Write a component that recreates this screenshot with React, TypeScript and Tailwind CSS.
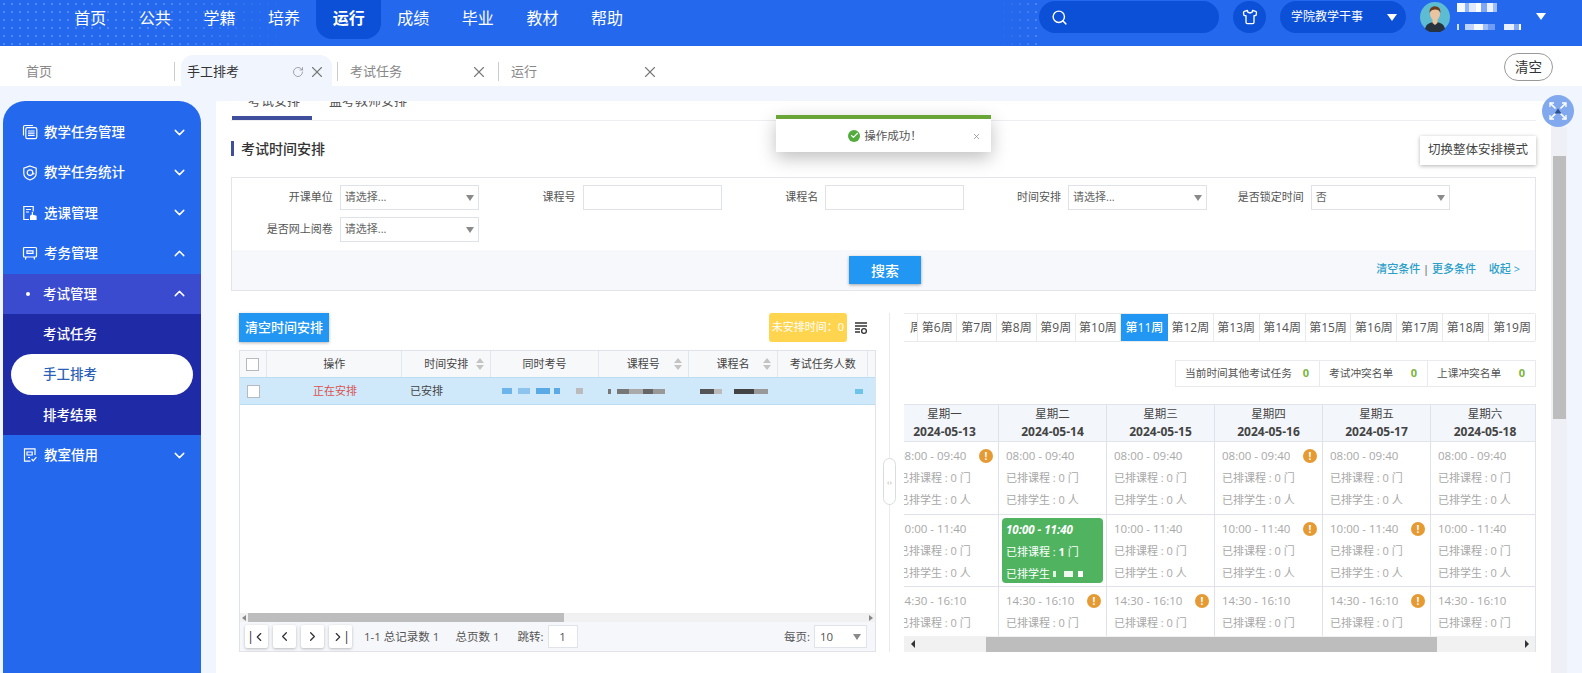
import React from 'react'
import { ChevronDown, ChevronUp, ChevronLeft, ChevronRight, Search, Shirt, RotateCw, X, Check } from 'lucide-react'

const navItems = ['首页', '公共', '学籍', '培养', '运行', '成绩', '毕业', '教材', '帮助']
const weeks = ['第12周', '第13周', '第14周', '第15周', '第16周', '第17周', '第18周', '第19周']
const days = [
  { name: '星期一', date: '2024-05-13' },
  { name: '星期二', date: '2024-05-14' },
  { name: '星期三', date: '2024-05-15' },
  { name: '星期四', date: '2024-05-16' },
  { name: '星期五', date: '2024-05-17' },
  { name: '星期六', date: '2024-05-18' },
]
const slots = [
  { time: '08:00 - 09:40', warn: [0, 3] },
  { time: '10:00 - 11:40', warn: [3, 4] },
  { time: '14:30 - 16:10', warn: [1, 2, 4] },
]

const Caret = () => <span className="h-0 w-0 border-x-[4px] border-t-[6px] border-x-transparent border-t-[#8a8a8a]" />

const Mosaic = ({ blocks, h = 'h-[5px]' }: { blocks: [number, string][]; h?: string }) => (
  <span className="flex items-center blur-[0.5px]">
    {blocks.map(([w, c], i) => (
      <span key={i} className={h} style={{ width: w, background: c }} />
    ))}
  </span>
)

const SideIcon = ({ kind }: { kind: number }) => (
  <svg viewBox="0 0 16 16" className="h-[16px] w-[16px]" fill="none" stroke="white" strokeWidth="1.2">
    {kind === 0 && (
      <>
        <path d="M1.500 11.500V3a1.500 1.500 0 0 1 1.500-1.500h8" />
        <rect x="3.800" y="3.600" width="11" height="11" rx="1.600" />
        <path d="M6 7h6.600M6 9.200h6.600M6 11.400h6.600" />
      </>
    )}
    {kind === 1 && (
      <>
        <path d="M8 1 14.200 3.200v5c0 3.400-2.800 5.600-6.200 6.800-3.400-1.200-6.200-3.400-6.200-6.800v-5z" />
        <circle cx="8" cy="7.600" r="2.800" />
        <path d="M10.800 7.600c0 1.600 1 1.800 1.400.8" />
      </>
    )}
    {kind === 2 && (
      <>
        <path d="M7 14.500H1.800v-13h9.400v5" />
        <path d="M4 4.500h5M4 7h3" />
        <path d="M8 15v-4.300l1.800-1.200V7h1.200v2.800l3.600.9V15z" fill="white" stroke="none" />
      </>
    )}
    {kind === 3 && (
      <>
        <rect x="1.500" y="2.500" width="13" height="9.500" rx="1" />
        <path d="M5 5.800h6v2.600H5zM4 12l-.6 2.500M12 12l.6 2.500" />
      </>
    )}
    {kind === 4 && (
      <>
        <path d="M13 8V1.800H2.500v12.400h6" />
        <path d="M5 5h5.200v3H5zM6 10.500h2" />
        <path d="m9.600 12 1.600 1.800 3.200-3.600" />
      </>
    )}
  </svg>
)

const SideRow = ({ icon, label, open }: { icon: number; label: string; open?: boolean }) => (
  <div className="flex h-[40.4px] items-center pl-[19px] pr-[13px] text-white">
    <SideIcon kind={icon} />
    <span className="ml-[6px] flex-1 text-[13.5px] font-medium">{label}</span>
    {open ? <ChevronUp size={17} /> : <ChevronDown size={17} />}
  </div>
)

const Field = ({ label, children }: { label: string; children: React.ReactNode }) => (
  <div className="flex w-[242.75px] items-center justify-end gap-[7px]">
    <span className="text-[11px] text-[#555]">{label}</span>
    {children}
  </div>
)

const SelectBox = ({ value }: { value: string }) => (
  <div className="flex h-[25px] w-[139px] items-center justify-between border border-[#dfe2e8] bg-white pl-[4px] pr-[4px] text-[11px] text-[#666]">
    {value}
    <Caret />
  </div>
)

const TextBox = () => <div className="h-[25px] w-[139px] border border-[#dfe2e8] bg-white" />

const Warn = () => (
  <span className="absolute right-[5px] top-[7px] flex h-[14px] w-[14px] items-center justify-center rounded-full bg-[#e59a33] text-[10px] font-bold leading-none text-white">
    !
  </span>
)

const HeadCell = ({ w, label, sort, children }: { w: string; label?: string; sort?: boolean; children?: React.ReactNode }) => (
  <div className={`relative flex h-full items-center justify-center border-r border-[#e3e6ec] text-[11px] text-[#444] ${w}`}>
    {label}
    {children}
    {sort && (
      <span className="absolute right-[6px] top-[7px] flex flex-col gap-[2px]">
        <span className="h-0 w-0 border-x-[4px] border-b-[5px] border-x-transparent border-b-[#c4c4c4]" />
        <span className="h-0 w-0 border-x-[4px] border-t-[5px] border-x-transparent border-t-[#c4c4c4]" />
      </span>
    )}
  </div>
)

const PageBtn = ({ children }: { children: React.ReactNode }) => (
  <div className="flex h-[23px] w-[23px] items-center justify-center rounded-[2px] bg-white text-[#333] shadow-[0_1px_3px_rgba(0,0,0,0.25)]">
    {children}
  </div>
)

export default function App() {
  return (
    <div className="relative h-[673px] w-[1582px] overflow-hidden bg-[#f1f5fe] [font-family:'Open_Sans','Noto_Sans_CJK_SC',sans-serif]">
      {/* top bar */}
      <header className="relative flex h-[46px] items-start bg-[#2468ee] text-white">
        <div className="absolute left-0 top-0 h-full w-[290px] bg-[radial-gradient(circle,rgba(255,255,255,0.2)_1px,transparent_1.6px)] bg-[length:8px_8px] [mask-image:linear-gradient(to_right,black_55%,transparent)]" />
        <div className="absolute left-[1000px] top-0 h-full w-[40px] bg-[radial-gradient(circle,rgba(255,255,255,0.2)_1px,transparent_1.6px)] bg-[length:8px_8px] [mask-image:linear-gradient(to_left,black,transparent)]" />
        <nav className="relative ml-[58px] flex">
          {navItems.map(item => (
            <div
              key={item}
              className={`flex h-[39px] w-[64.6px] items-center justify-center pb-[3px] text-[16px] ${item === '运行' ? 'rounded-b-[16px] bg-[#0d50d8] font-bold' : ''}`}
            >
              {item}
            </div>
          ))}
        </nav>
        <div className="relative ml-auto flex items-start pr-[36px] pt-[1px]">
          <div className="flex h-[32px] w-[180px] items-center rounded-full bg-[#0d50d8] pl-[12px]">
            <Search size={17} strokeWidth={2} />
          </div>
          <div className="ml-[14px] flex h-[32px] w-[33px] items-center justify-center rounded-full bg-[#0d50d8]">
            <Shirt size={16} />
          </div>
          <div className="ml-[14px] flex h-[32px] w-[126px] items-center justify-between rounded-full bg-[#0d50d8] pl-[11px] pr-[9px] text-[12px]">
            学院教学干事
            <span className="h-0 w-0 border-x-[5px] border-t-[7px] border-x-transparent border-t-white" />
          </div>
          <svg viewBox="0 0 30 30" className="ml-[14px] mt-[1px] h-[30px] w-[30px]">
            <circle cx="15" cy="15" r="15" fill="#5dbcd2" />
            <path d="M5 27c1-5 5-7 10-7s9 2 10 7a15 15 0 0 1-20 0z" fill="#26333f" />
            <path d="M12.500 16h5v5l-2.500 2-2.500-2z" fill="#eac4a0" />
            <ellipse cx="15" cy="12" rx="5" ry="6" fill="#eac4a0" />
            <path d="M9.600 11c-.5-5 3-7 6-6.600 3 0 5.400 2.600 4.800 6.600-1-2.600-2.600-3.400-5-3.400-2.600 0-4.800.8-5.800 3.400z" fill="#6b3c1d" />
          </svg>
          <div className="ml-[7px] flex h-[31px] w-[79px] flex-col justify-between py-[2px]">
            <Mosaic h="h-[9px]" blocks={[[8, '#f4f8ff'], [4, '#8fb4ff'], [7, '#dfe9ff'], [5, '#ffffff'], [6, '#7fa8f8'], [6, '#eaf1ff'], [4, '#9dbdff']]} />
            <Mosaic h="h-[6px]" blocks={[[2, '#cfe0ff'], [6, '#2468ee'], [9, '#bcd3ff'], [9, '#f4f8ff'], [5, '#9dbdff'], [7, '#6f9df5'], [9, '#2468ee'], [10, '#e6eeff'], [5, '#7fa8f8'], [2, '#ffffff']]} />
          </div>
          <span className="mt-[12px] h-0 w-0 border-x-[5px] border-t-[7px] border-x-transparent border-t-white" />
        </div>
      </header>

      {/* open tabs */}
      <div className="flex h-[40px] items-end bg-white pl-[15px] text-[13px]">
        <div className="mb-[5px] flex h-[19px] w-[160px] items-center border-r border-[#ccc] pl-[11px] text-[#888]">首页</div>
        <div className="ml-[6px] flex h-[31px] w-[151px] items-center rounded-t-[12px] bg-[#f1f5fe] pl-[6px] pr-[6px] pt-[2px] text-[#333]">
          <span className="flex-1">手工排考</span>
          <RotateCw size={12} strokeWidth={1.500} className="mr-[4px] text-[#888]" />
          <X size={18} strokeWidth={1.500} className="text-[#777]" />
        </div>
        <div className="mb-[5px] ml-[5px] flex h-[19px] w-[162px] items-center border-x border-[#ccc] pl-[12px] pr-[10px] text-[#888]">
          <span className="flex-1">考试任务</span>
          <X size={18} strokeWidth={1.500} className="text-[#777]" />
        </div>
        <div className="mb-[5px] flex h-[19px] w-[160px] items-center pl-[12px] text-[#888]">
          <span className="flex-1">运行</span>
          <X size={18} strokeWidth={1.500} className="text-[#777]" />
        </div>
        <div className="mb-[5px] ml-auto mr-[29px] flex h-[28px] w-[49px] items-center justify-center rounded-full border border-[#999] text-[13.5px] text-[#333]">
          清空
        </div>
      </div>

      <div className="flex pt-[15px]">
        {/* sidebar */}
        <aside className="ml-[3px] h-[572px] w-[198px] rounded-t-[22px] bg-[#2468ee] pt-[11px]">
          <SideRow icon={0} label="教学任务管理" />
          <SideRow icon={1} label="教学任务统计" />
          <SideRow icon={2} label="选课管理" />
          <SideRow icon={3} label="考务管理" open />
          <div className="flex h-[40.4px] items-center bg-[#3a4bd0] pl-[23px] pr-[13px] text-white">
            <span className="h-[4px] w-[4px] rounded-full bg-white" />
            <span className="ml-[13px] flex-1 text-[13.5px] font-medium">考试管理</span>
            <ChevronUp size={17} />
          </div>
          <div className="bg-[#1f2ba6] text-[13.5px] font-medium text-white">
            <div className="flex h-[40px] items-center pl-[40px]">考试任务</div>
            <div className="mx-[8px] flex h-[41px] items-center rounded-full bg-white pl-[32px] text-[#2b5fb8]">手工排考</div>
            <div className="flex h-[40px] items-center pl-[40px]">排考结果</div>
          </div>
          <SideRow icon={4} label="教室借用" />
        </aside>

        {/* main panel */}
        <main className="ml-[15px] h-[572px] w-[1335px] overflow-hidden bg-white px-[15px]">
          <div className="relative h-[20px] overflow-hidden border-b border-[#eceef2]">
            <div className="-mt-[9px] flex text-[13px] leading-[16px] text-[#555]">
              <span className="w-[80px] pl-[6px] text-center">考试安排</span>
              <span className="ml-[18px]">监考教师安排</span>
            </div>
            <div className="absolute bottom-0 left-[1px] h-[4px] w-[80px] bg-[#3f4f9b]" />
          </div>

          <div className="flex h-[56px] items-start justify-between pt-[15px]">
            <div className="mt-[5px] flex items-center border-l-[3px] border-[#3f4f9b] pl-[7px] text-[14px] font-medium leading-[15px] text-[#333]">
              考试时间安排
            </div>
            <div className="flex h-[29px] w-[116px] items-center justify-center bg-white text-[12.5px] text-[#444] shadow-[0_1px_4px_rgba(0,0,0,0.3)]">
              切换整体安排模式
            </div>
          </div>

          <section className="h-[114px] border border-[#e3e5ea]">
            <div className="flex h-[72px] flex-col gap-[7px] pl-[4px] pt-[7px]">
              <div className="flex">
                <Field label="开课单位"><SelectBox value="请选择..." /></Field>
                <Field label="课程号"><TextBox /></Field>
                <Field label="课程名"><TextBox /></Field>
                <Field label="时间安排"><SelectBox value="请选择..." /></Field>
                <Field label="是否锁定时间"><SelectBox value="否" /></Field>
              </div>
              <Field label="是否网上阅卷"><SelectBox value="请选择..." /></Field>
            </div>
            <div className="relative flex h-[40px] justify-center bg-[#f7f8fc] pt-[6px]">
              <div className="ml-[3px] flex h-[28px] w-[72px] items-center justify-center bg-[#2196f3] text-[14px] font-medium text-white shadow-[0_1px_3px_rgba(0,0,0,0.35)]">
                搜索
              </div>
              <div className="absolute right-[15px] top-[11px] text-[11px] font-medium text-[#2b9fc9]">
                清空条件 <span className="text-[#555]">|</span> 更多条件 <span className="ml-[10px]">收起 &gt;</span>
              </div>
            </div>
          </section>

          <div className="flex pt-[22px]">
            {/* arrangement list */}
            <section className="ml-[8px] w-[638px]">
              <div className="flex h-[29px] justify-between">
                <div className="flex w-[90px] items-center justify-center bg-[#2196f3] text-[13px] font-medium text-white shadow-[0_1px_3px_rgba(0,0,0,0.3)]">
                  清空时间安排
                </div>
                <div className="mr-[9px] flex items-center gap-[7px]">
                  <div className="flex h-[29px] w-[78px] items-center justify-center rounded-[3px] bg-[#ffd54f] text-[11px] text-white">
                    未安排时间：0
                  </div>
                  <svg viewBox="0 0 14 14" className="h-[14px] w-[14px]" fill="none" stroke="#333" strokeWidth="1.300">
                    <path d="M1 2h12M1 5h12M1 8h5M1 11h5" />
                    <circle cx="10" cy="10" r="2.400" />
                  </svg>
                </div>
              </div>
              <div className="mt-[8px] h-[302px] w-[637px] border border-[#e0e3e9]">
                <div className="flex h-[26px] bg-[#f7f8fa] pr-[7px]">
                  <HeadCell w="w-[27px]">
                    <span className="h-[13px] w-[13px] border border-[#b5b9c0] bg-white" />
                  </HeadCell>
                  <HeadCell w="w-[136px]" label="操作" />
                  <HeadCell w="w-[89px]" label="时间安排" sort />
                  <HeadCell w="w-[108px]" label="同时考号" />
                  <HeadCell w="w-[90px]" label="课程号" sort />
                  <HeadCell w="w-[90px]" label="课程名" sort />
                  <HeadCell w="w-[90px]" label="考试任务人数" />
                </div>
                <div className="relative flex h-[28px] items-center border-y border-[#bcdcf3] bg-[#cfe8fa] text-[11px]">
                  <div className="flex w-[27px] justify-center"><span className="h-[13px] w-[13px] border border-[#b5b9c0] bg-white" /></div>
                  <div className="w-[136px] text-center text-[#d9534f]">正在安排</div>
                  <div className="w-[89px] pl-[7px] text-[#444]">已安排</div>
                  <div className="flex w-[108px] items-center pl-[10px]">
                    <Mosaic h="h-[6px]" blocks={[[10, '#6cb4ea'], [6, '#cfe8fa'], [12, '#8cc4ee'], [6, '#cfe8fa'], [14, '#5aaae6'], [4, '#cfe8fa'], [6, '#5aaae6'], [16, '#cfe8fa'], [7, '#bbb']]} />
                  </div>
                  <div className="flex w-[90px] items-center pl-[8px]">
                    <Mosaic blocks={[[3, '#777'], [6, '#cfe8fa'], [12, '#777'], [14, '#aaa'], [10, '#666'], [12, '#999']]} />
                  </div>
                  <div className="flex w-[90px] items-center pl-[10px]">
                    <Mosaic blocks={[[14, '#555'], [8, '#bbb'], [12, '#cfe8fa'], [20, '#444'], [14, '#999']]} />
                  </div>
                  <div className="flex w-[90px] justify-end pr-[7px]"><Mosaic blocks={[[8, '#6cc4ea']]} /></div>
                </div>
                <div className="h-[208px]" />
                <div className="flex h-[9px] items-center bg-[#f1f1f1]">
                  <span className="ml-[2px] h-0 w-0 border-y-[3px] border-r-[4px] border-y-transparent border-r-[#888]" />
                  <div className="ml-[2px] h-[9px] w-[316px] bg-[#bdbdbd]" />
                  <span className="ml-auto mr-[2px] h-0 w-0 border-y-[3px] border-l-[4px] border-y-transparent border-l-[#888]" />
                </div>
                <div className="flex h-[29px] items-center bg-[#f5f7fb] pl-[5px] pr-[8px] text-[11.5px] text-[#555]">
                  <div className="flex gap-[5px]">
                    <PageBtn><span className="text-[13px] leading-none">|</span><ChevronLeft size={14} className="-ml-[2px]" /></PageBtn>
                    <PageBtn><ChevronLeft size={15} /></PageBtn>
                    <PageBtn><ChevronRight size={15} /></PageBtn>
                    <PageBtn><ChevronRight size={14} className="-mr-[2px]" /><span className="text-[13px] leading-none">|</span></PageBtn>
                  </div>
                  <span className="ml-[12px]">1-1 总记录数 1</span>
                  <span className="ml-[16px]">总页数 1</span>
                  <span className="ml-[18px]">跳转:</span>
                  <div className="ml-[4px] flex h-[23px] w-[30px] items-center justify-center border border-[#e0e3e9] bg-white">1</div>
                  <span className="ml-auto">每页:</span>
                  <div className="ml-[4px] flex h-[23px] w-[53px] items-center justify-between border border-[#e0e3e9] bg-white px-[5px]">
                    10
                    <Caret />
                  </div>
                </div>
              </div>
            </section>

            {/* splitter */}
            <div className="relative ml-[12px] w-[1px] bg-[#e8eaee]">
              <div className="absolute left-[-6px] top-[145px] flex h-[47px] w-[13px] items-center justify-center rounded-full border border-[#d9dce2] bg-white text-[8px] text-[#aaa]">
                ‹›
              </div>
            </div>

            {/* calendar */}
            <section className="ml-[14px] w-[632px]">
              <div className="flex h-[29px] overflow-hidden rounded-r-[2px] border-y border-r border-[#e8eaee] text-[12px] text-[#555]">
                <div className="flex w-[14px] items-center justify-end overflow-hidden whitespace-nowrap border-r border-[#e8eaee]"><span className="-mr-[5px]">周</span></div>
                {['第6周', '第7周', '第8周', '第9周'].map(w => (
                  <div key={w} className="flex w-[39.6px] items-center justify-center border-r border-[#e8eaee]">{w}</div>
                ))}
                <div className="flex w-[45px] items-center justify-center border-r border-[#e8eaee]">第10周</div>
                <div className="flex w-[47px] items-center justify-center bg-[#2196f3] font-medium text-white">第11周</div>
                {weeks.map(w => (
                  <div key={w} className="flex w-[46px] items-center justify-center border-r border-[#e8eaee] last:border-r-0">{w}</div>
                ))}
              </div>

              <div className="mt-[18px] flex justify-end">
                <div className="flex h-[27px] items-center border border-[#e8eaee] text-[10.7px] text-[#555]">
                  <div className="flex h-full w-[144px] items-center justify-between border-r border-[#e8eaee] pl-[9px] pr-[10px]">当前时间其他考试任务<b className="text-[11px] text-[#7cb342]">0</b></div>
                  <div className="flex h-full w-[108px] items-center justify-between border-r border-[#e8eaee] pl-[9px] pr-[10px]">考试冲突名单<b className="text-[11px] text-[#7cb342]">0</b></div>
                  <div className="flex h-full w-[107px] items-center justify-between pl-[9px] pr-[10px]">上课冲突名单<b className="text-[11px] text-[#7cb342]">0</b></div>
                </div>
              </div>

              <div className="mt-[17px] h-[248px] border-b border-r border-[#dfe2e8]">
                <div className="h-[232px] overflow-hidden">
                  <div className="-ml-[13px] flex h-[38px] w-[648px] border-y border-[#e1e4ea] bg-[#f3f6fb] text-center text-[11.5px] leading-[18px] text-[#444]">
                    {days.map(d => (
                      <div key={d.date} className="w-[108px] border-r border-[#dfe2e8] last:border-r-0">
                        <div>{d.name}</div>
                        <div className="text-[12px] font-bold">{d.date}</div>
                      </div>
                    ))}
                  </div>
                  {slots.map((slot, row) => (
                    <div key={slot.time} className="-ml-[13px] flex h-[72.500px] w-[648px] border-b border-[#dfe2e8] text-[11px] text-[#a8a8a8]">
                      {days.map((d, col) =>
                        row === 1 && col === 1 ? (
                          <div key={d.date} className="w-[108px] border-r border-[#dfe2e8] p-[3px]">
                            <div className="h-full rounded-[4px] bg-[#4fb360] pl-[4px] text-white">
                              <div className="pt-[1px] text-[11.5px] font-bold italic leading-[22px]">{slot.time}</div>
                              <div className="leading-[22px]">已排课程 : <b>1</b> 门</div>
                              <div className="flex items-center gap-[3px] leading-[22px]">
                                已排学生
                                <Mosaic h="h-[6px]" blocks={[[3, '#dff3e1'], [8, '#4fb360'], [9, '#eef9ef'], [5, '#4fb360'], [5, '#fff']]} />
                              </div>
                            </div>
                          </div>
                        ) : (
                          <div key={d.date} className="relative w-[108px] border-r border-[#dfe2e8] pl-[7px] pt-[3px] leading-[22px] last:border-r-0">
                            <div className="text-[11.5px]">{slot.time}</div>
                            <div>已排课程 : 0 门</div>
                            <div>已排学生 : 0 人</div>
                            {slot.warn.includes(col) && <Warn />}
                          </div>
                        ),
                      )}
                    </div>
                  ))}
                </div>
                <div className="flex h-[16px] items-center bg-[#f1f1f1]">
                  <span className="ml-[7px] h-0 w-0 border-y-[4px] border-r-[4px] border-y-transparent border-r-[#333]" />
                  <div className="ml-[71px] h-[15px] w-[451px] bg-[#bdbdbd]" />
                  <span className="ml-auto mr-[6px] h-0 w-0 border-y-[4px] border-l-[4px] border-y-transparent border-l-[#333]" />
                </div>
              </div>
            </section>
          </div>
        </main>

        {/* page scrollbar */}
        <div className="mt-[26px] flex h-[546px] w-[16px] flex-col items-center bg-[#eef0f5]">
          <div className="mt-[29px] h-[263px] w-[13px] bg-[#bdbdbd]" />
        </div>
      </div>

      {/* collapse bubble */}
      <div className="absolute left-[1542px] top-[95px] flex h-[32px] w-[32px] items-center justify-center rounded-full bg-[#82a8ee]">
        <svg viewBox="0 0 32 32" className="h-[32px] w-[32px]" fill="none" stroke="white" strokeWidth="1.700">
          <path d="M8 8l5.500 5.500M24 8l-5.500 5.500M8 24l5.500-5.500M24 24l-5.500-5.500" />
          <path d="M8 12V8h4M20 8h4v4M8 20v4h4M24 20v4h-4" strokeWidth="1.300" />
          <path d="M12.500 18.500 16 13.500l3.500 5z" fill="#2f4f8f" stroke="none" />
        </svg>
      </div>

      {/* success toast */}
      <div className="absolute left-[776px] top-[115px] flex h-[37px] w-[215px] items-center justify-center border-t-[4px] border-[#69a637] bg-white pl-[3px] text-[11.5px] text-[#555] shadow-[0_6px_18px_rgba(0,0,0,0.25)]">
        <span className="mr-[4px] flex h-[12px] w-[12px] items-center justify-center rounded-full bg-[#52ad3c] text-white">
          <Check size={9} strokeWidth={3} />
        </span>
        操作成功！
        <X size={9} className="absolute right-[10px] top-[13px] text-[#888]" />
      </div>
    </div>
  )
}
